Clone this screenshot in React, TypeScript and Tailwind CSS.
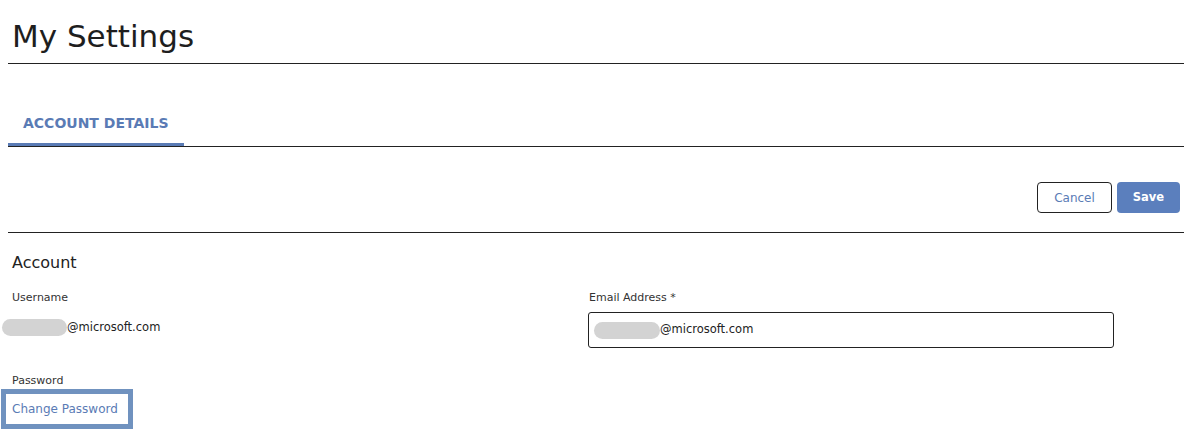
import React from 'react';

const font = { fontFamily: '"DejaVu Sans", "Liberation Sans", sans-serif' };

function Redacted({ className = '' }: { className?: string }) {
  return <span className={`inline-block h-[17px] rounded-full bg-[#d3d3d3] align-middle ${className}`} />;
}

export default function App() {
  return (
    <div className="min-h-[433px] bg-white text-[#222]" style={font}>
      <div className="ml-[8px] w-[1176px]">
        {/* Page title */}
        <div className="pt-[18px] pb-[9px] border-b border-[#222]">
          <h1 className="pl-[4px] text-[31px] leading-[36px] font-normal text-[#1e1e1e]">My Settings</h1>
        </div>

        {/* Tabs */}
        <div className="flex border-b border-[#222]">
          <div className="pt-[49px] pb-[10px] px-[15px] border-b-[3px] border-[#5a7bb5] text-[14px] leading-[20px] font-bold text-[#5a7bb5]">
            ACCOUNT DETAILS
          </div>
        </div>

        {/* Actions */}
        <div className="flex justify-end gap-[5px] pt-[35px] pb-[19px] pr-[4px] border-b border-[#222]">
          <button className="h-[31px] w-[75px] rounded-[4px] border border-[#222] bg-white text-[12px] text-[#5a7bb5]">
            Cancel
          </button>
          <button className="h-[31px] w-[63px] rounded-[4px] bg-[#5b7fbd] text-[11.5px] font-bold text-white">
            Save
          </button>
        </div>

        {/* Account section */}
        <div className="px-[4px]">
          <h2 className="mt-[18px] text-[16px] leading-[24px] font-normal text-[#222]">Account</h2>

          <div className="mt-[15px] flex">
            <div className="w-[577px]">
              <div className="text-[11px] leading-[16px] text-[#333]">Username</div>
              <div className="mt-[13px] text-[11.5px] leading-[16px] text-[#222] whitespace-nowrap">
                <Redacted className="-ml-[10px] w-[65px]" />
                @microsoft.com
              </div>
            </div>
            <div className="flex-1">
              <div className="text-[11px] leading-[16px] text-[#333]">Email Address *</div>
              <div className="mt-[6px] flex h-[36px] w-[526px] items-center rounded-[3px] border border-[#222] pl-[5px] text-[11.5px] text-[#222] -ml-px">
                <Redacted className="w-[66px] h-[15px]" />
                @microsoft.com
              </div>
            </div>
          </div>

          <div className="mt-[25px] text-[11px] leading-[16px] text-[#333]">Password</div>
          <div className="-ml-[11px] inline-block border-[5px] border-[#7092bf] pl-[6px] pr-[10px] py-[7px]">
            <span className="block text-[12px] leading-[16px] text-[#5a7bb5]">Change Password</span>
          </div>
        </div>
      </div>
    </div>
  );
}
